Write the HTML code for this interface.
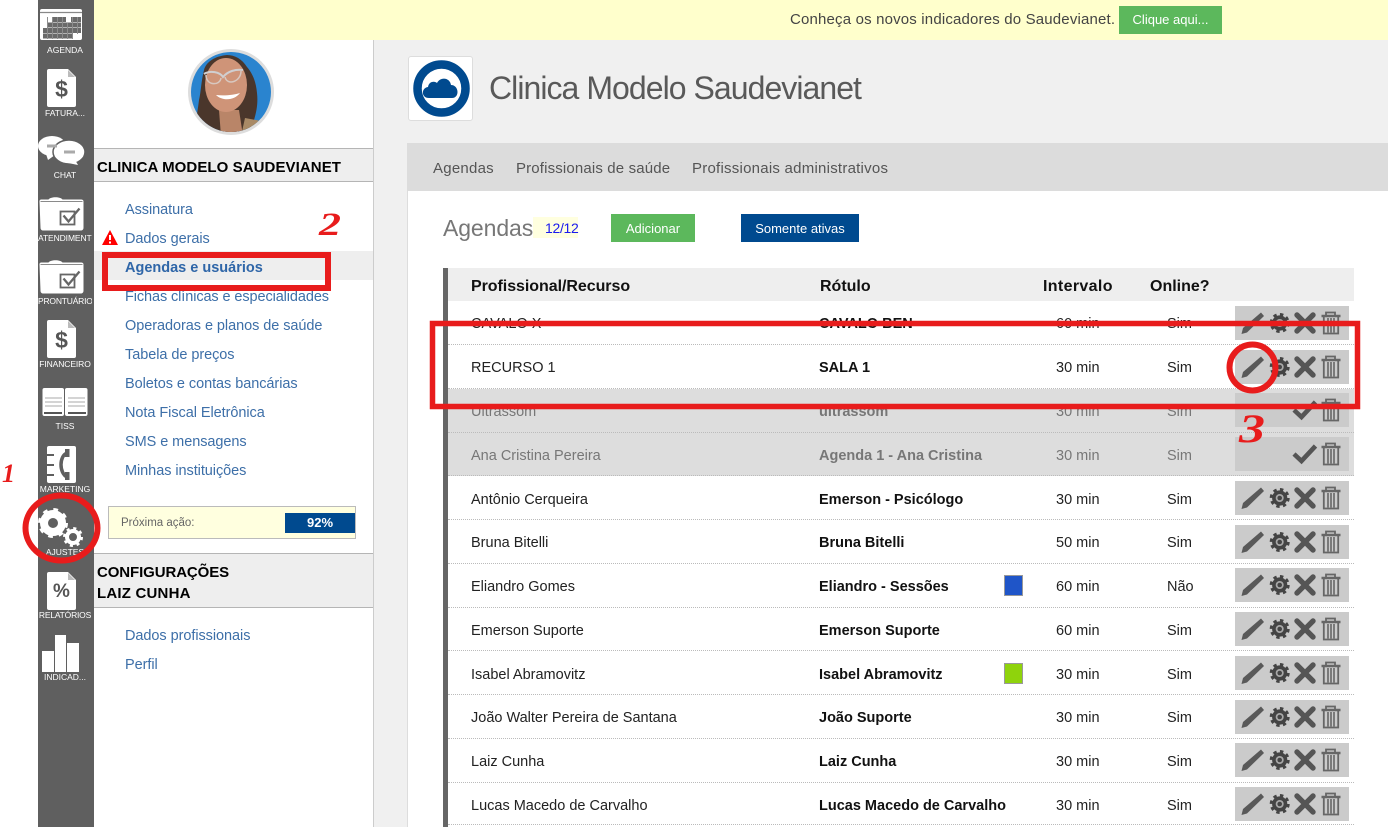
<!DOCTYPE html>
<html lang="pt"><head><meta charset="utf-8"><title>Agendas</title>
<style>
html,body{margin:0;padding:0;background:#fff}
#p{position:relative;width:1388px;height:827px;overflow:hidden;font-family:"Liberation Sans",sans-serif;font-size:14.5px;color:#222;background:#f0f0f0}
#p div,#p span.a{position:absolute}
.t{white-space:nowrap;line-height:20px;height:20px}
.lab{left:38px;width:54px;overflow:hidden;text-align:center;color:#fff;font-size:8.5px;line-height:12px;height:12px;white-space:nowrap}
.lk{left:125px;color:#3d6fa8;font-size:14.5px;line-height:20px;white-space:nowrap;margin-top:1px;letter-spacing:-.06px}
.h{left:94px;width:279px;background:#eee;border-top:1px solid #b5b5b5;border-bottom:1px solid #b5b5b5;box-sizing:border-box}
.hd{left:97px;font-weight:bold;font-size:15px;color:#000;line-height:21px;white-space:nowrap;margin-top:1px}
.r{left:448px;width:906px;height:44px;border-bottom:1px dotted #bbb;box-sizing:border-box}
.g{background:#ddd}
.n{left:23px;top:13px;white-space:nowrap;line-height:20px}
.l{left:371px;top:13px;white-space:nowrap;line-height:20px;font-weight:bold;color:#111}
.i{left:608px;top:13px;white-space:nowrap;line-height:20px}
.o{left:719px;top:13px;white-space:nowrap;line-height:20px}
.x .n,.x .l,.x .i,.x .o{top:14px}
.g .n,.g .l,.g .i,.g .o{color:#777}
.r svg{position:absolute;left:787px;top:4px}
.r.b svg{top:5px}
.sw{left:556px;top:11px;width:19px;height:21px;border:1px solid #999;box-sizing:border-box}
.x .sw{top:12px}
</style></head><body>
<div id="p">
<svg width="0" height="0" style="position:absolute">
<defs>
<symbol id="act" viewBox="0 0 114 34">
<rect width="114" height="34" fill="#cbcbcb"/>
<path d="M6.500 28 L8 22 L26 6.500 L29 10 L12 26.500 Z" fill="#595959"/>
<circle cx="44.700" cy="17" r="7.600" fill="#444"/>
<circle cx="44.700" cy="17" r="8.600" fill="none" stroke="#444" stroke-width="2.800" stroke-dasharray="3.400 3.350"/>
<circle cx="44.700" cy="17" r="4" fill="#a8a8a8"/>
<circle cx="44.700" cy="17" r="2.300" fill="#444"/>
<path d="M62 9 L78 25 M78 9 L62 25" stroke="#555" stroke-width="5.400" stroke-linecap="round"/>
<g fill="none" stroke="#666"><path d="M86.500 10h19" stroke-width="2.400"/><path d="M91 10V6.500h9V10" stroke-width="1.800"/><path d="M88.800 11 V27.500 H103.200 V11" stroke-width="1.800"/><path d="M93 12V26.500M96 12V26.500M99 12V26.500" stroke-width="1.600"/></g>
</symbol>
<symbol id="chk" viewBox="0 0 114 34">
<rect width="114" height="34" fill="#cbcbcb"/>
<path d="M59 17 L66.500 24 L80.500 9" fill="none" stroke="#555" stroke-width="4.600"/>
<g fill="none" stroke="#666"><path d="M86.500 10h19" stroke-width="2.400"/><path d="M91 10V6.500h9V10" stroke-width="1.800"/><path d="M88.800 11 V27.500 H103.200 V11" stroke-width="1.800"/><path d="M93 12V26.500M96 12V26.500M99 12V26.500" stroke-width="1.600"/></g>
</symbol>
<symbol id="doc" viewBox="0 0 29 38"><path d="M2 0H21L29 8V36a2 2 0 0 1-2 2H2a2 2 0 0 1-2-2V2a2 2 0 0 1 2-2Z" fill="#fff"/><path d="M21 1L28 8H21Z" fill="#bbb"/></symbol>
<symbol id="fold" viewBox="0 0 46 35"><path d="M1 5C1 3 2 3 4 3H10C12 0 22 0 24 3H42C45 3 45 4 45 6V31C45 33 44 34 42 34H5C3 34 2 33 2 31Z" fill="#fff"/><path d="M2 5H44" stroke="#8a8a8a" stroke-width="1"/><rect x="22" y="15" width="14" height="13" fill="none" stroke="#666" stroke-width="1.800"/><path d="M25 19L30 25L41 12" fill="none" stroke="#666" stroke-width="2.300"/></symbol>
</defs>
</svg>

<!-- top banner -->
<div style="left:94px;top:0;width:1294px;height:40px;background:#ffffcc"></div>
<div class="t" style="left:790px;top:10px;font-size:15px;color:#444;letter-spacing:.17px">Conheça os novos indicadores do Saudevianet.</div>
<div class="t" style="left:1119px;top:6px;width:103px;height:28px;line-height:28px;background:#5cb85c;color:#fff;text-align:center;font-size:13px">Clique aqui...</div>

<!-- left strip / sidebar -->
<div style="left:0;top:0;width:38px;height:827px;background:#fff"></div>
<div style="left:38px;top:0;width:56px;height:827px;background:#5f5f5f"></div>

<svg style="position:absolute;left:38px;top:0" width="56" height="700" viewBox="38 0 56 700">
<!-- agenda -->
<rect x="40" y="9" width="42" height="31" rx="2" fill="#fff"/><path d="M40 12.500H82" stroke="#888" stroke-width="1.200"/>
<path d="M52 19.500H81M47 25H81M43 30.500H81M43 36H73" stroke="#6a6a6a" stroke-width="5"/>
<rect x="66" y="17" width="5" height="5" fill="#fff"/>
<path d="M47.500 17V39M52.500 17V39M57.500 17V39M62.500 17V39M67.500 23V39M72.500 17V39M77.500 17V34" stroke="#8c8c8c" stroke-width="1"/>
<!-- fatura -->
<use href="#doc" x="47" y="69" width="29" height="38"/>
<!-- chat -->
<ellipse cx="52" cy="146" rx="14" ry="10" fill="#fff"/><path d="M46 154L48 160L55 155Z" fill="#fff"/>
<ellipse cx="69" cy="152" rx="16" ry="12" fill="#fff" stroke="#5f5f5f" stroke-width="1.500"/><path d="M68 163L78 165L74 158Z" fill="#fff"/>
<path d="M47 146H57M64 152H75" stroke="#aaa" stroke-width="3"/>
<!-- folders -->
<use href="#fold" x="38.500" y="196.500" width="46" height="35"/>
<use href="#fold" x="38.500" y="259.500" width="46" height="35"/>
<!-- financeiro -->
<use href="#doc" x="47" y="320" width="29" height="38"/>
<!-- tiss -->
<rect x="42.500" y="388" width="21.500" height="28" rx="2" fill="#fff"/><rect x="65" y="388" width="22.500" height="28" rx="2" fill="#fff"/>
<path d="M45 398H62M45 402H62M45 406H62M68 398H85M68 402H85M68 406H85" stroke="#bbb" stroke-width="1.200"/>
<path d="M44 413H62M68 413H86" stroke="#555" stroke-width="2"/>
<!-- marketing -->
<rect x="47" y="446" width="29" height="37" rx="2" fill="#fff"/>
<path d="M46 455H54M46 465H54M46 475H54" stroke="#5f5f5f" stroke-width="2"/>
<path d="M67 453C59 456 59 473 67 477" fill="none" stroke="#5f5f5f" stroke-width="3.500"/>
<rect x="65" y="449" width="4.500" height="8" fill="#5f5f5f"/><rect x="65" y="472" width="4.500" height="8" fill="#5f5f5f"/>
<!-- ajustes -->
<circle cx="53" cy="523" r="9" fill="none" stroke="#fff" stroke-width="8"/>
<circle cx="53" cy="523" r="13" fill="none" stroke="#fff" stroke-width="4" stroke-dasharray="4.500 5.700"/>
<circle cx="73" cy="537" r="6" fill="none" stroke="#fff" stroke-width="4"/>
<circle cx="73" cy="537" r="8.500" fill="none" stroke="#fff" stroke-width="3" stroke-dasharray="3 3.670"/>
<!-- relatorios -->
<use href="#doc" x="47" y="572" width="29" height="38"/>
<!-- indicadores -->
<rect x="42" y="651" width="12" height="21" fill="#fff"/><rect x="55" y="635" width="11" height="37" fill="#fff"/><rect x="67" y="643" width="12" height="29" fill="#fff"/>
</svg>
<div class="t" style="left:47px;top:76px;width:29px;text-align:center;font-weight:bold;font-size:23px;line-height:26px;height:26px;color:#555">$</div>
<div class="t" style="left:47px;top:327px;width:29px;text-align:center;font-weight:bold;font-size:23px;line-height:26px;height:26px;color:#555">$</div>
<div class="t" style="left:47px;top:579px;width:29px;text-align:center;font-weight:bold;font-size:19px;line-height:26px;height:26px;color:#555">%</div>
<div class="lab" style="top:44px">AGENDA</div>
<div class="lab" style="top:107px">FATURA...</div>
<div class="lab" style="top:169px">CHAT</div>
<div class="lab" style="top:232px;text-align:left;letter-spacing:-.1px">ATENDIMENTO</div>
<div class="lab" style="top:295px;letter-spacing:-.2px">PRONTUÁRIO</div>
<div class="lab" style="top:358px;letter-spacing:-.1px">FINANCEIRO</div>
<div class="lab" style="top:420px">TISS</div>
<div class="lab" style="top:483px">MARKETING</div>
<div class="lab" style="top:546px">AJUSTES</div>
<div class="lab" style="top:609px;letter-spacing:-.2px">RELATÓRIOS</div>
<div class="lab" style="top:671px">INDICAD...</div>

<!-- left panel -->
<div style="left:94px;top:40px;width:280px;height:787px;background:#fff;border-right:1px solid #ccc;box-sizing:border-box"></div>
<svg style="position:absolute;left:187px;top:48px" width="88" height="88" viewBox="0 0 88 88">
<defs><clipPath id="cp"><circle cx="44" cy="44" r="40"/></clipPath></defs>
<circle cx="44" cy="44" r="43" fill="#ddd"/>
<g clip-path="url(#cp)">
<rect width="88" height="88" fill="#2a84cf"/>
<path d="M40 7C28 8 19 14 17 22C14 34 14 44 12 52C11 60 10 66 9 72L34 88H60L67 72C70 62 71 54 70 45C69 34 66 26 60 19C55 11 48 7 40 7Z" fill="#4a362b"/>
<path d="M58 70L80 74V88H54Z" fill="#a98a66"/>
<path d="M32 62L34 88H56L52 62Z" fill="#b98568"/>
<ellipse cx="39" cy="37" rx="21" ry="27" fill="#cf9478"/>
<path d="M29 47C35 53 47 53 53 45C47 47 37 48 29 47Z" fill="#fff"/>
<path d="M17 26C23 22 33 24 36 29C41 23 49 21 56 22" fill="none" stroke="#d0cfd0" stroke-width="2"/>
<path d="M19 27C19 38 33 38 34 30M38 29C40 38 54 34 54 23" fill="none" stroke="#d8c8c0" stroke-width="1.500"/>
</g>
</svg>
<div class="h" style="top:148px;height:34px"></div>
<div class="hd" style="top:156px;letter-spacing:.08px">CLINICA MODELO SAUDEVIANET</div>
<div style="left:94px;top:251px;width:279px;height:29px;background:#eee"></div>
<svg style="position:absolute;left:102px;top:230px" width="16" height="15"><path d="M8 0L16 15H0Z" fill="#f00"/><path d="M8 5V10M8 11.500V13.500" stroke="#fff" stroke-width="2"/></svg>
<div class="lk" style="top:199px">Assinatura</div>
<div class="lk" style="top:228px">Dados gerais</div>
<div class="lk" style="top:257px;font-weight:bold;color:#2f66a8;letter-spacing:0">Agendas e usuários</div>
<div class="lk" style="top:286px;letter-spacing:-.1px">Fichas clínicas e especialidades</div>
<div class="lk" style="top:315px">Operadoras e planos de saúde</div>
<div class="lk" style="top:344px">Tabela de preços</div>
<div class="lk" style="top:373px">Boletos e contas bancárias</div>
<div class="lk" style="top:402px">Nota Fiscal Eletrônica</div>
<div class="lk" style="top:431px">SMS e mensagens</div>
<div class="lk" style="top:460px">Minhas instituições</div>
<div style="left:108px;top:506px;width:248px;height:33px;background:#ffffdf;border:1px solid #bbb;box-sizing:border-box"></div>
<div class="t" style="left:121px;top:513px;font-size:11.500px;color:#666">Próxima ação:</div>
<div class="t" style="left:285px;top:513px;width:70px;height:20px;background:#004a8f;color:#fff;font-weight:bold;font-size:13px;text-align:center">92%</div>
<div class="h" style="top:553px;height:55px"></div>
<div class="hd" style="top:561px;letter-spacing:-.1px">CONFIGURAÇÕES</div>
<div class="hd" style="top:582px;letter-spacing:.2px">LAIZ CUNHA</div>
<div class="lk" style="top:625px">Dados profissionais</div>
<div class="lk" style="top:654px">Perfil</div>

<!-- logo / title -->
<div style="left:408px;top:56px;width:65px;height:65px;background:#fff;border:1px solid #ddd;border-radius:3px;box-sizing:border-box"></div>
<svg style="position:absolute;left:413px;top:60px" width="57" height="57" viewBox="0 0 57 57">
<circle cx="28.500" cy="28.500" r="24" fill="none" stroke="#004a8f" stroke-width="8.500"/>
<path d="M16 38C8 38 8 28 15 27C16 21 22 21 24 23C28 16 37 18 38 25C46 25 47 38 39 38Z" fill="#004a8f"/>
</svg>
<div class="t" style="left:489px;top:68px;height:40px;line-height:40px;font-size:32px;color:#595959;letter-spacing:-.95px">Clinica Modelo Saudevianet</div>

<!-- main -->
<div style="left:407px;top:143px;width:981px;height:48px;background:#dcdcdc"></div>
<div style="left:407px;top:191px;width:981px;height:636px;background:#fff;border-left:1px solid #ddd;box-sizing:border-box"></div>
<div class="t" style="left:433px;top:160px;font-size:15px;color:#555;letter-spacing:.24px;height:20px;margin-top:-1px">Agendas</div>
<div class="t" style="left:516px;top:160px;font-size:15px;color:#555;letter-spacing:.15px;margin-top:-1px">Profissionais de saúde</div>
<div class="t" style="left:692px;top:160px;font-size:15px;color:#555;letter-spacing:.24px;margin-top:-1px">Profissionais administrativos</div>
<div class="t" style="left:443px;top:215px;height:26px;line-height:26px;font-size:23px;color:#777;letter-spacing:-.1px">Agendas</div>
<div style="left:533px;top:217px;width:45px;height:21px;background:#ffffdf"></div>
<div class="t" style="left:545px;top:218px;font-size:14px;color:#1a1aee;letter-spacing:-.3px">12/12</div>
<div class="t" style="left:611px;top:214px;width:84px;height:28px;line-height:30px;background:#5cb85c;color:#fff;text-align:center;font-size:13px">Adicionar</div>
<div class="t" style="left:741px;top:214px;width:118px;height:28px;line-height:30px;background:#004a8f;color:#fff;text-align:center;font-size:13px">Somente ativas</div>

<!-- table -->
<div style="left:443px;top:268px;width:5px;height:559px;background:#666"></div>
<div style="left:448px;top:268px;width:906px;height:33px;background:#eee"></div>
<div class="t" style="left:471px;top:277px;font-weight:bold;font-size:16px;color:#111;letter-spacing:-.05px">Profissional/Recurso</div>
<div class="t" style="left:820px;top:277px;font-weight:bold;font-size:16px;color:#111">Rótulo</div>
<div class="t" style="left:1043px;top:277px;font-weight:bold;font-size:16px;color:#111;letter-spacing:.35px">Intervalo</div>
<div class="t" style="left:1150px;top:277px;font-weight:bold;font-size:16px;color:#111">Online?</div>

<div class="r b" style="top:301px"><div class="n">CAVALO X</div><div class="l">CAVALO BEN</div><div class="i">60 min</div><div class="o">Sim</div><svg width="114" height="34"><use href="#act"/></svg></div>
<div class="r b" style="top:345px"><div class="n">RECURSO 1</div><div class="l">SALA 1</div><div class="i">30 min</div><div class="o">Sim</div><svg width="114" height="34"><use href="#act"/></svg></div>
<div class="r g" style="top:389px"><div class="n">Ultrassom</div><div class="l">ultrassom</div><div class="i">30 min</div><div class="o">Sim</div><svg width="114" height="34"><use href="#chk"/></svg></div>
<div class="r g" style="top:433px;height:43px"><div class="n">Ana Cristina Pereira</div><div class="l">Agenda 1 - Ana Cristina</div><div class="i">30 min</div><div class="o">Sim</div><svg width="114" height="34"><use href="#chk"/></svg></div>
<div class="r b x" style="top:476px"><div class="n">Antônio Cerqueira</div><div class="l">Emerson - Psicólogo</div><div class="i">30 min</div><div class="o">Sim</div><svg width="114" height="34"><use href="#act"/></svg></div>
<div class="r b" style="top:520px"><div class="n">Bruna Bitelli</div><div class="l">Bruna Bitelli</div><div class="i">50 min</div><div class="o">Sim</div><svg width="114" height="34"><use href="#act"/></svg></div>
<div class="r" style="top:564px"><div class="n">Eliandro Gomes</div><div class="l">Eliandro - Sessões</div><div class="sw" style="background:#1f55c8"></div><div class="i">60 min</div><div class="o">Não</div><svg width="114" height="34"><use href="#act"/></svg></div>
<div class="r" style="top:608px;height:43px"><div class="n">Emerson Suporte</div><div class="l">Emerson Suporte</div><div class="i">60 min</div><div class="o">Sim</div><svg width="114" height="34"><use href="#act"/></svg></div>
<div class="r b x" style="top:651px"><div class="n">Isabel Abramovitz</div><div class="l">Isabel Abramovitz</div><div class="sw" style="background:#8fd30c"></div><div class="i">30 min</div><div class="o">Sim</div><svg width="114" height="34"><use href="#act"/></svg></div>
<div class="r b" style="top:695px"><div class="n">João Walter Pereira de Santana</div><div class="l">João Suporte</div><div class="i">30 min</div><div class="o">Sim</div><svg width="114" height="34"><use href="#act"/></svg></div>
<div class="r" style="top:739px"><div class="n">Laiz Cunha</div><div class="l">Laiz Cunha</div><div class="i">30 min</div><div class="o">Sim</div><svg width="114" height="34"><use href="#act"/></svg></div>
<div class="r" style="top:783px;height:42px"><div class="n">Lucas Macedo de Carvalho</div><div class="l">Lucas Macedo de Carvalho</div><div class="i">30 min</div><div class="o">Sim</div><svg width="114" height="34"><use href="#act"/></svg></div>

<!-- red annotations -->
<svg style="position:absolute;left:0;top:0" width="1388" height="827" viewBox="0 0 1388 827">
<g fill="none" stroke="#e81c1c">
<rect x="432.500" y="323.500" width="925" height="83" stroke-width="5.500"/>
<ellipse cx="1252.500" cy="367.500" rx="23" ry="23" stroke-width="6"/>
<rect x="105" y="255" width="223" height="33" stroke-width="6"/>
<ellipse cx="61.500" cy="528" rx="36" ry="32.500" stroke-width="6"/>
</g>
<g fill="#e81c1c" font-family="Liberation Serif, serif" font-style="italic" font-weight="bold">
<text x="2" y="482" font-size="26" textLength="13" lengthAdjust="spacingAndGlyphs">1</text>
<text x="319" y="235" font-size="33" textLength="22" lengthAdjust="spacingAndGlyphs">2</text>
<text x="1239" y="442" font-size="40" textLength="26" lengthAdjust="spacingAndGlyphs">3</text>
</g>
</svg>
</div>
</body></html>
